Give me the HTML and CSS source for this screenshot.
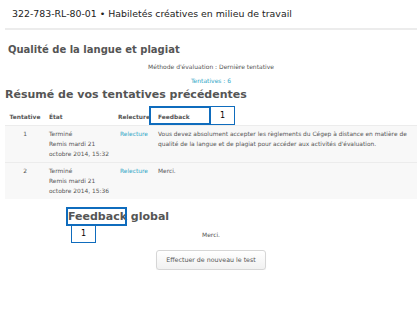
FILE: index.html
```html
<!DOCTYPE html>
<html lang="fr">
<head>
    <meta charset="UTF-8">
    <title>Résumé de vos tentatives</title>
    <link rel="stylesheet" href="styles.css">
</head>
<body>
    <div class="course-header">
        <h1>322-783-RL-80-01 &bull; Habiletés créatives en milieu de travail</h1>
    </div>

    <div class="quiz-main">
        <h2 class="quiz-title">Qualité de la langue et plagiat</h2>
        <p class="quiz-info">Méthode d'évaluation : Dernière tentative</p>
        <p class="quiz-info"><a href="#">Tentatives : 6</a></p>

        <h3 class="summary-title">Résumé de vos tentatives précédentes</h3>
        <table class="attempts">
            <thead>
                <tr>
                    <th class="col-num">Tentative</th>
                    <th class="col-state">État</th>
                    <th class="col-review">Relecture</th>
                    <th class="col-feedback">Feedback</th>
                </tr>
            </thead>
            <tbody>
                <tr>
                    <td class="col-num">1</td>
                    <td class="col-state">Terminé<br>Remis mardi 21<br>octobre 2014, 15:32</td>
                    <td class="col-review"><a href="#">Relecture</a></td>
                    <td class="col-feedback">Vous devez absolument accepter les règlements du Cégep à distance en matière de qualité de la langue et de plagiat pour accéder aux activités d'évaluation.</td>
                </tr>
                <tr>
                    <td class="col-num">2</td>
                    <td class="col-state">Terminé<br>Remis mardi 21<br>octobre 2014, 15:36</td>
                    <td class="col-review"><a href="#">Relecture</a></td>
                    <td class="col-feedback">Merci.</td>
                </tr>
            </tbody>
        </table>

        <h3 class="overall-title">Feedback global</h3>
        <p class="overall-text">Merci.</p>

        <div class="actions">
            <button type="button" class="btn">Effectuer de nouveau le test</button>
        </div>
    </div>

    <!-- annotation markers -->
    <div class="mark mark-head"></div>
    <div class="mark-label label-head">1</div>
    <div class="mark mark-global"></div>
    <div class="mark-label label-global">1</div>
</body>
</html>
```

FILE: styles.css
```css
* {
    margin: 0;
    padding: 0;
    box-sizing: border-box;
}

:root {
    --text: #555;
    --link: #2fa6c6;
    --row-bg: #f8f8f8;
    --line: #ececec;
    --mark: #0f6cbd;
}

body {
    position: relative;
    font-family: 'DejaVu Sans', Verdana, sans-serif;
    color: var(--text);
    background: #fff;
}

a {
    color: var(--link);
    text-decoration: none;
}

.course-header {
    margin-left: 5px;
    padding: 8px 7px 8px;
    border-bottom: 2px solid var(--line);
}

.course-header h1 {
    font-size: 9.4px;
    font-weight: normal;
    line-height: 12px;
    color: #222;
}

.quiz-main {
    padding: 0 0 0 5px;
}

.quiz-title {
    font-size: 10px;
    line-height: 14px;
    margin: 13px 0 0 3px;
}

.quiz-info {
    font-size: 6px;
    line-height: 8px;
    text-align: center;
    margin-top: 6px;
}

.summary-title {
    font-size: 11px;
    line-height: 14px;
    margin-top: 3px;
}

.attempts {
    width: 100%;
    border-collapse: collapse;
    margin-top: 4px;
    font-size: 5.9px;
}

.attempts th {
    font-weight: bold;
    line-height: 10px;
    padding: 6px 4px 3px;
    text-align: left;
    border-bottom: 1px solid var(--line);
}

.attempts td {
    line-height: 10px;
    padding: 3px 4px 3px;
    vertical-align: top;
    text-align: left;
    background: var(--row-bg);
    border-bottom: 1px solid var(--line);
}

.attempts tr:last-child td {
    border-bottom: none;
}

.attempts .col-num {
    width: 40px;
    text-align: center;
}

.attempts .col-state {
    width: 69px;
}

.attempts .col-review {
    width: 40px;
    text-align: center;
}

.overall-title {
    font-size: 11px;
    line-height: 14px;
    margin: 11px 0 0 63px;
}

.overall-text {
    font-size: 6px;
    line-height: 8px;
    text-align: center;
    margin-top: 7px;
}

.actions {
    text-align: center;
    margin-top: 8px;
}

.btn {
    font-family: inherit;
    font-size: 6.3px;
    color: #555;
    padding: 0 9px;
    height: 20px;
    background: linear-gradient(#fff, #f1f1f1);
    border: 1px solid #d6d6d6;
    border-radius: 3px;
    box-shadow: 0 1px 1px rgba(0, 0, 0, 0.06);
}

.mark {
    position: absolute;
    border: 2px solid var(--mark);
}

.mark-label {
    position: absolute;
    width: 25px;
    height: 18px;
    border: 1px solid var(--mark);
    background: #fff;
    color: #000;
    font-size: 8px;
    line-height: 16px;
    text-align: center;
}

.mark-head {
    left: 149px;
    top: 106px;
    width: 62px;
    height: 19px;
}

.label-head {
    left: 210px;
    top: 106px;
    height: 19px;
    line-height: 17px;
}

.mark-global {
    left: 66px;
    top: 207px;
    width: 61px;
    height: 19px;
}

.label-global {
    left: 71px;
    top: 225px;
}
```
